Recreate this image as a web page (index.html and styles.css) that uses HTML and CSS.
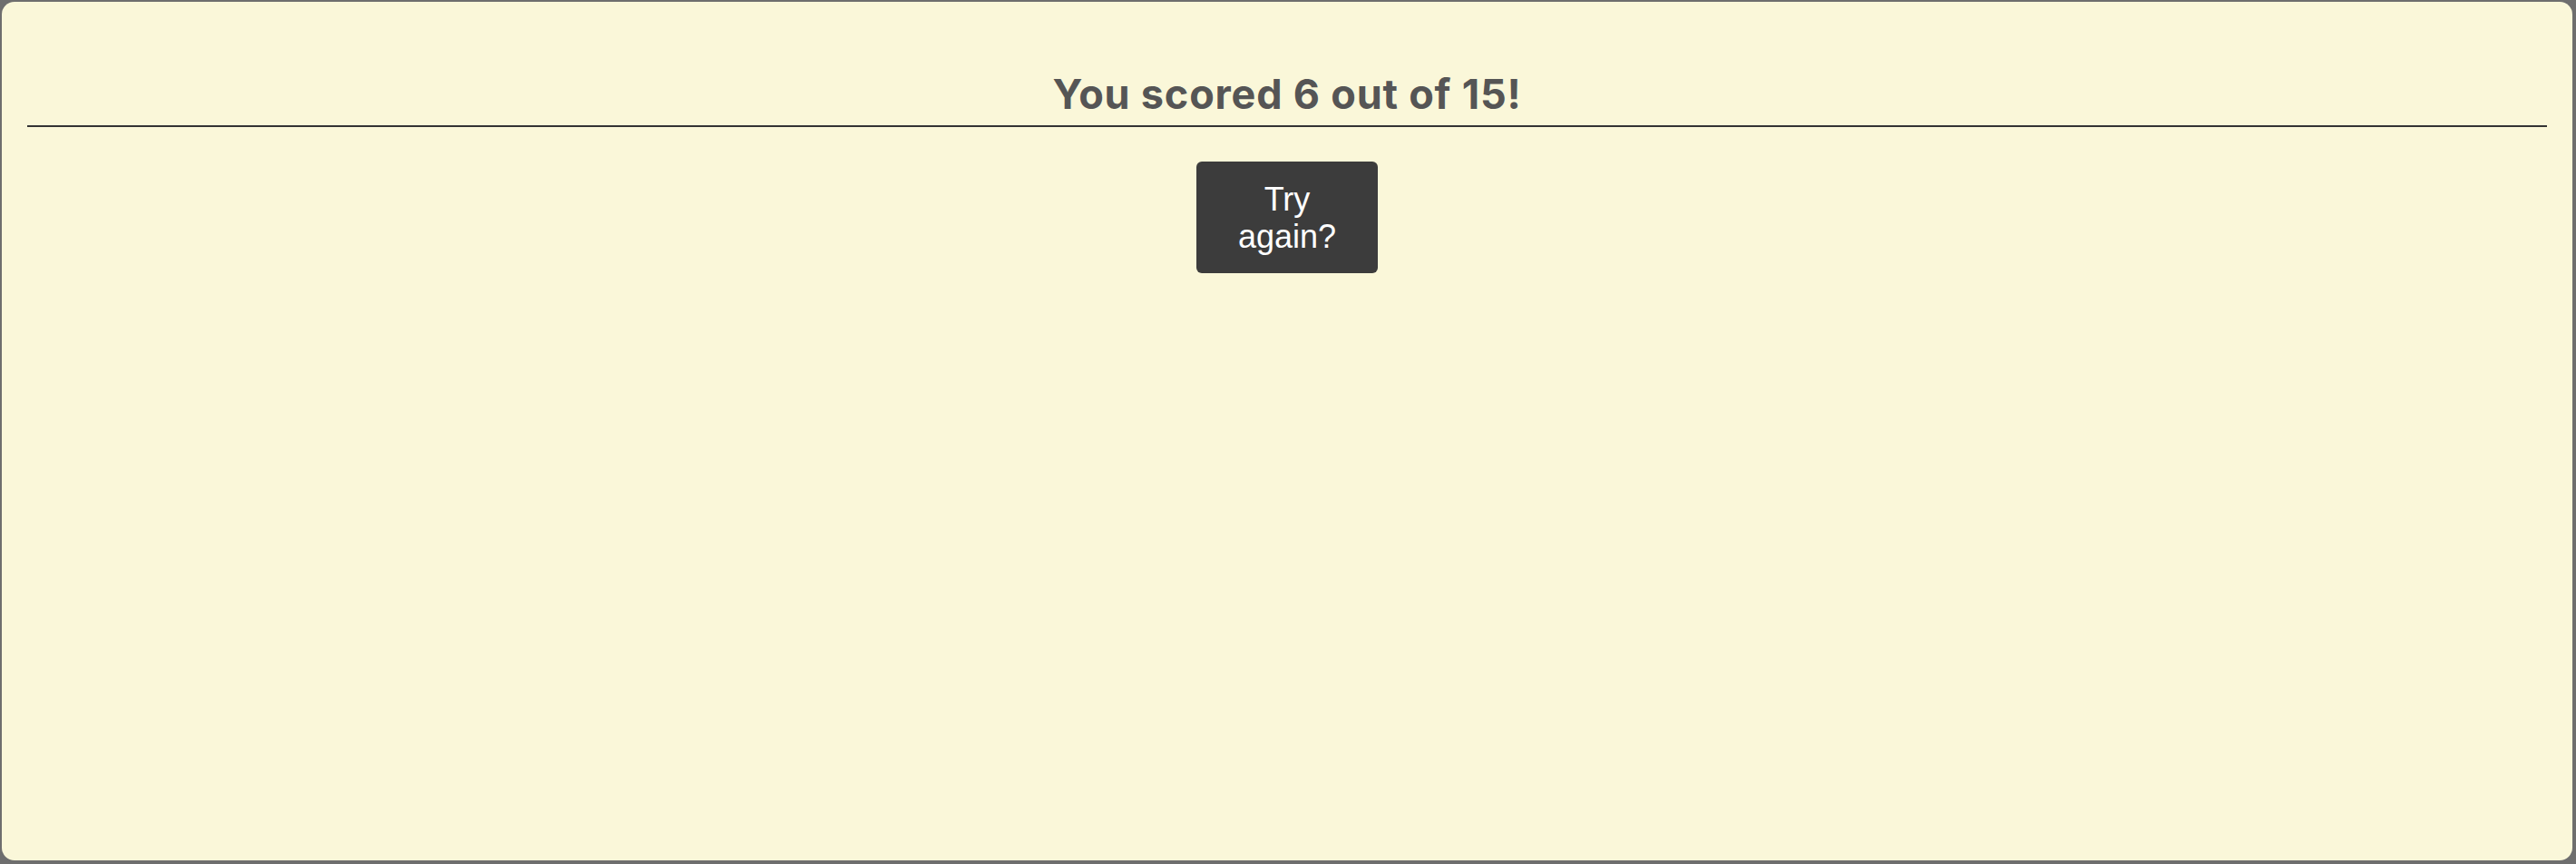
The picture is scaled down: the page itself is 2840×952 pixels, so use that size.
FILE: index.html
```html
<!DOCTYPE html>
<html lang="en">
<head>
<meta charset="utf-8">
<title>Quiz result</title>
<link rel="stylesheet" href="styles.css">
</head>
<body>
  <main class="card">
    <h1 class="score">You scored 6 out of 15!</h1>
    <hr class="divider">
    <div class="actions">
      <button class="retry" type="button">Try again?</button>
    </div>
  </main>
</body>
</html>
```

FILE: styles.css
```css
* { box-sizing: border-box; }
html, body { height: 100%; }
body {
  margin: 0;
  padding: 2px 4px 4px 2px;
  background: #6e6e6e;
}
.card {
  height: 100%;
  background: #faf7d9;
  border-radius: 14px;
  padding: 0 28px;
  display: flex;
  flex-direction: column;
}
.score {
  margin: 75px 0 0;
  font-family: Inter, "Noto Sans", sans-serif;
  font-weight: 700;
  font-size: 45px;
  line-height: 54px;
  color: #555555;
  text-align: center;
  letter-spacing: 0.8px;
}
.divider {
  margin: 7px 0 0;
  border: 0;
  height: 2px;
  background: #333333;
}
.actions {
  display: flex;
  justify-content: center;
  padding-top: 38px;
}
.retry {
  width: 200px;
  padding: 21px 16px 20px;
  background: #3c3c3c;
  color: #ffffff;
  border: 0;
  border-radius: 6px;
  font-family: "Liberation Sans", Arial, sans-serif;
  font-size: 36px;
  line-height: 41px;
}
```
